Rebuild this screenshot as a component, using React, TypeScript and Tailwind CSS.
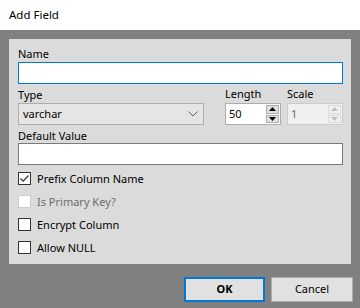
import React from 'react';

const font = { fontFamily: '"Noto Sans", "Segoe UI", sans-serif' };

function Spinner({ disabled }: { disabled?: boolean }) {
  const tri = disabled ? '#bfbfbf' : '#000000';
  const btn = disabled
    ? 'border-[#dadada] bg-[#f0f0f0]'
    : 'border-[#adadad] bg-[#e1e1e1]';
  return (
    <div className="flex h-full w-[15px] flex-col gap-px p-px">
      <div className={`flex flex-1 items-center justify-center border ${btn}`}>
        <svg width="7" height="4" viewBox="0 0 7 4">
          <path d="M0 4 L3.5 0 L7 4 Z" fill={tri} />
        </svg>
      </div>
      <div className={`flex flex-1 items-center justify-center border ${btn}`}>
        <svg width="7" height="4" viewBox="0 0 7 4">
          <path d="M0 0 L7 0 L3.5 4 Z" fill={tri} />
        </svg>
      </div>
    </div>
  );
}

function Check({ label, checked, disabled }: { label: string; checked?: boolean; disabled?: boolean }) {
  return (
    <div className="flex h-[23px] items-center gap-[6px]">
      <div
        className={`flex h-[13px] w-[13px] items-center justify-center border bg-white ${
          disabled ? 'border-[#cccccc]' : 'border-[#333333]'
        }`}
      >
        {checked && (
          <svg width="11" height="11" viewBox="0 0 11 11">
            <path d="M1.5 5.5 L4.2 8.2 L9.5 2.5" fill="none" stroke="#333333" strokeWidth="1.2" />
          </svg>
        )}
      </div>
      <span className={`text-[11px] leading-none ${disabled ? 'text-[#6d6d6d]' : 'text-black'}`}>{label}</span>
    </div>
  );
}

export default function App() {
  return (
    <div className="flex h-[308px] w-[360px] flex-col bg-[#808080]" style={font}>
      <div className="flex h-[30px] items-center bg-white pl-[9px] text-[11.5px] text-black">Add Field</div>

      <div className="mx-[9px] mt-[9px] flex h-[225px] flex-col bg-[#dbdbdb] pl-[9px] pr-[8px] pt-[6px]">
        <label className="h-[17px] text-[11px] leading-[17px] text-black">Name</label>
        <div className="h-[22px] border border-[#0078d7] bg-white" />

        <div className="mt-[1px] flex">
          <div className="flex w-[186px] flex-col">
            <label className="h-[18px] text-[11px] leading-[20px] text-black">Type</label>
            <div className="flex h-[22px] items-center justify-between border border-[#adadad] bg-[#e5e5e5] pl-[4px] pr-[5px]">
              <span className="text-[11px] text-black">varchar</span>
              <svg width="10" height="6" viewBox="0 0 10 6">
                <path d="M0.5 0.5 L5 5 L9.5 0.5" fill="none" stroke="#606060" strokeWidth="1" />
              </svg>
            </div>
          </div>
          <div className="ml-[21px] flex w-[56px] flex-col">
            <label className="h-[18px] text-[11px] leading-[18px] text-black">Length</label>
            <div className="flex h-[22px] items-center justify-between border border-[#adadad] bg-white pl-[3px]">
              <span className="text-[11px] text-black">50</span>
              <Spinner />
            </div>
          </div>
          <div className="ml-[6px] flex w-[56px] flex-col">
            <label className="h-[18px] text-[11px] leading-[18px] text-black">Scale</label>
            <div className="flex h-[22px] items-center justify-between border border-[#cccccc] bg-[#f0f0f0] pl-[3px]">
              <span className="text-[11px] text-[#6d6d6d]">1</span>
              <Spinner disabled />
            </div>
          </div>
        </div>

        <label className="mt-[1px] h-[17px] text-[11px] leading-[19px] text-black">Default Value</label>
        <div className="h-[22px] border border-[#7a7a7a] bg-white" />

        <div className="mt-[2px] flex flex-col">
          <Check label="Prefix Column Name" checked />
          <Check label="Is Primary Key?" disabled />
          <Check label="Encrypt Column" />
          <Check label="Allow NULL" />
        </div>
      </div>

      <div className="mr-[7px] mt-[13px] flex justify-end gap-[6px]">
        <button className="flex h-[25px] w-[81px] items-center justify-center border-2 border-[#0078d7] bg-[#e1e1e1] text-[11px] font-bold text-black">
          OK
        </button>
        <button className="flex h-[25px] w-[82px] items-center justify-center border border-[#adadad] bg-[#e1e1e1] text-[11px] text-black">
          Cancel
        </button>
      </div>
    </div>
  );
}
